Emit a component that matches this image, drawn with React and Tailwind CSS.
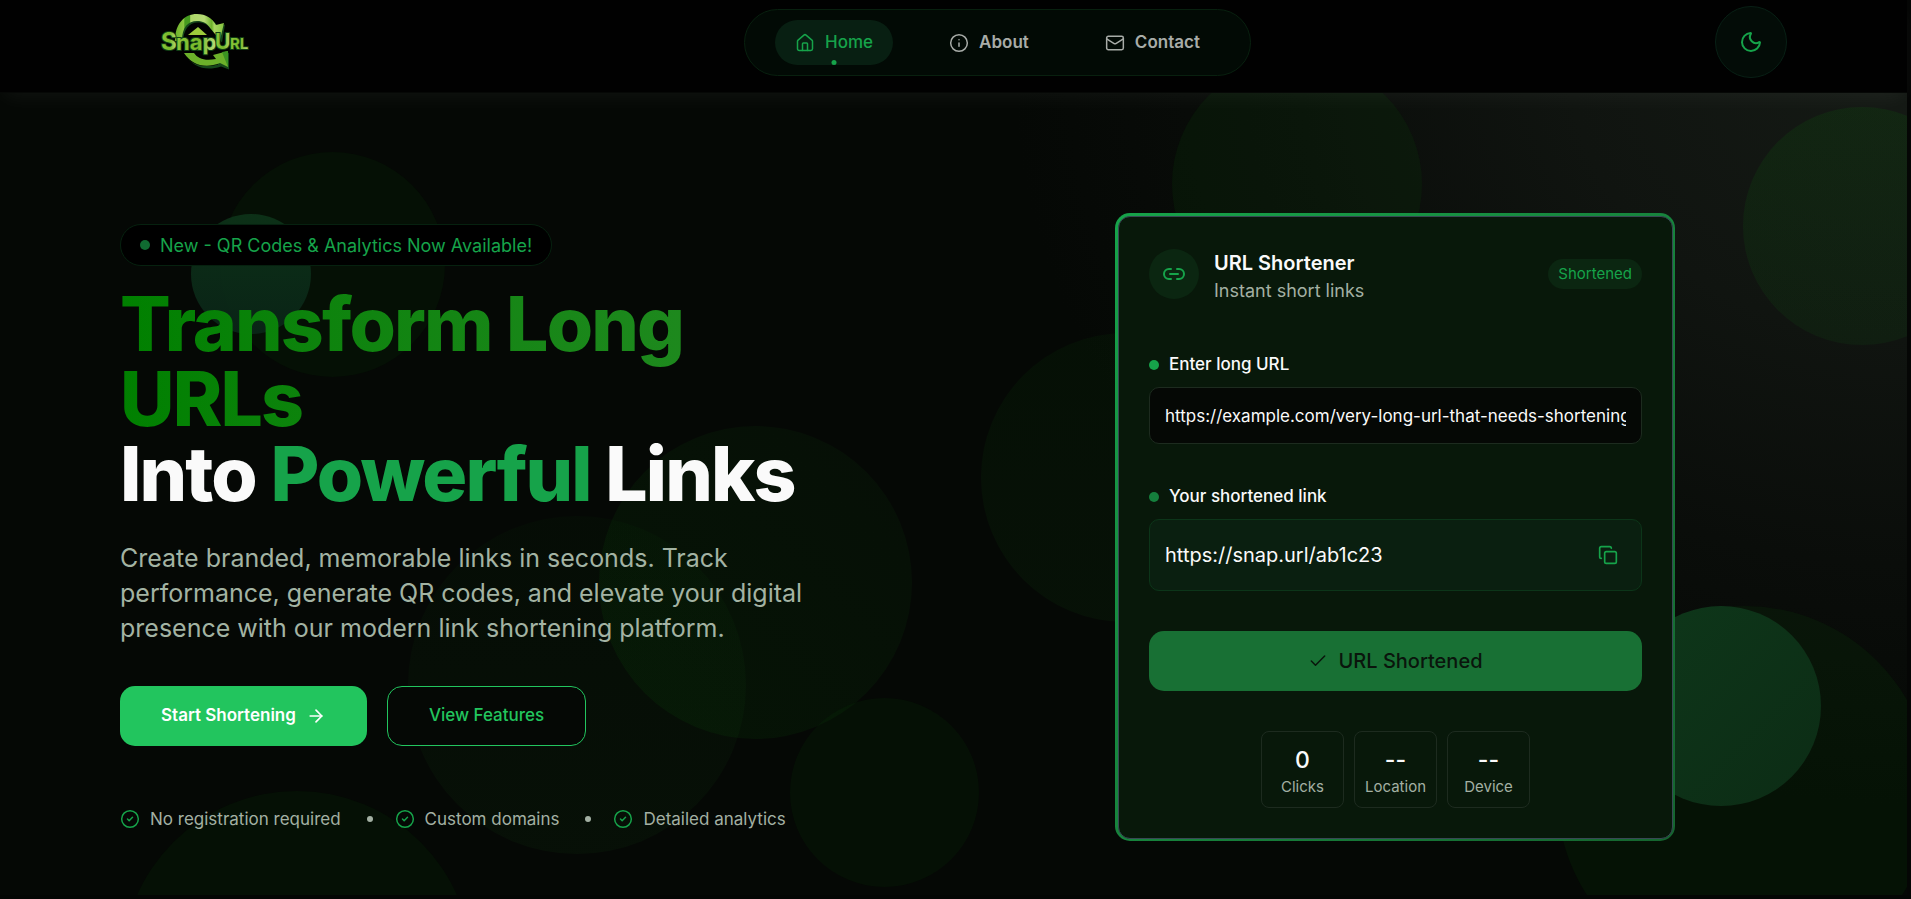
import { House, Info, Mail, Moon, ArrowRight, CircleCheck, Link2, Copy, Check } from 'lucide-react';

const circles = [
  'left-[220px] top-[152px] size-[225px] bg-[#087808]/8',
  'left-[191px] top-[214px] size-[120px] bg-linear-to-b from-[#0d3419]/90 to-[#0a2618]/90',
  'left-[599px] top-[426px] size-[313px] bg-linear-to-bl from-[#187818]/6 to-[#087808]/11',
  'left-[408px] top-[516px] size-[338px] bg-linear-to-b from-[#087808]/4 to-[#228b22]/6',
  'left-[790px] top-[698px] size-[189px] bg-[#107810]/8',
  'left-[122px] top-[791px] size-[350px] bg-[#107810]/8',
  'left-[981px] top-[333px] size-[289px] bg-linear-to-b from-[#087808]/7 to-[#187818]/8',
  'left-[1172px] top-[59px] size-[250px] bg-[#087808]/9',
  'left-[1743px] top-[107px] size-[238px] bg-linear-to-b from-[#087808]/14 to-[#107818]/10',
  'left-[1557px] top-[606px] size-[375px] bg-[#107810]/9',
  'left-[1621px] top-[606px] size-[200px] bg-linear-to-br from-[#0e371a] to-[#0c2c15]',
];

function Logo() {
  return (
    <svg viewBox="0 0 110 70" className="h-[70px] w-[110px]" role="img" aria-label="SnapUrl">
      <defs>
        <linearGradient id="lime" x1="0" y1="0" x2="1" y2="0">
          <stop offset="0" stopColor="#8cc63a" />
          <stop offset="0.55" stopColor="#76b82a" />
          <stop offset="1" stopColor="#b9dc7c" />
        </linearGradient>
        <linearGradient id="arc" x1="0" y1="0" x2="1" y2="0">
          <stop offset="0" stopColor="#6cb02a" />
          <stop offset="0.18" stopColor="#8bc540" />
          <stop offset="0.2" stopColor="#459a1f" />
          <stop offset="0.3" stopColor="#459a1f" />
          <stop offset="0.32" stopColor="#add667" />
          <stop offset="0.6" stopColor="#b5da74" />
          <stop offset="0.75" stopColor="#6cb02a" />
          <stop offset="0.8" stopColor="#a8d560" />
          <stop offset="1" stopColor="#86c440" />
        </linearGradient>
      </defs>
      <g transform="translate(1 1.5)" fill="#16471a">
        <path d="M25 37C25 20 34 10 47 10C56 10 62 13 67 20L74 18L71 36L61 24C57 18 53 16 47 16C38 16 32 23 32 37Z" />
        <path d="M34 48C40 58 50 62 67 58L64 54L78 46L78 63L70 60C55 65 42 61 34 48Z" />
      </g>
      <path d="M25 36C25 19 34 9 47 9C56 9 62 13 66 20L74 18L70 35L61 24C57 18 53 16 47 16C38 16 32 22 32 36Z" fill="url(#arc)" />
      <path d="M34 48L44 48C48 54 55 56 66 54L63 50L78 46L78 62L70 58C55 64 42 60 34 48Z" fill="#6cb02a" />
      <path d="M72 47L78 46L78 62Z" fill="#3c9322" />
      <path d="M38 30L48 22L57 30Z" fill="#9ccb3b" />
      <g fontFamily="Inter, sans-serif" fontWeight="700" stroke="#123f14" strokeWidth="2" paintOrder="stroke" fill="url(#lime)">
        <text x="11" y="45" fontSize="24">S</text>
        <text x="26" y="45" fontSize="22">nap</text>
        <text x="65" y="44" fontSize="21">U</text>
        <text x="80" y="44" fontSize="15">RL</text>
      </g>
    </svg>
  );
}

function NavItem({ icon: Icon, label, active }) {
  return (
    <a
      href={'#' + label.toLowerCase()}
      aria-current={active ? 'page' : undefined}
      className={
        active
          ? 'relative flex h-[45px] items-center gap-2.5 rounded-full bg-[#081f12] px-5 font-medium text-[#16a34a]'
          : 'relative flex h-[45px] items-center gap-2.5 rounded-full px-5 font-semibold text-[#a8aca8]'
      }
    >
      <Icon className="size-5" strokeWidth={1.8} />
      {label}
      {active && <span className="absolute bottom-0 left-1/2 size-[5px] -translate-x-1/2 rounded-full bg-[#16a34a]" />}
    </a>
  );
}

function Stat({ value, label }) {
  return (
    <div className="flex h-[77px] w-[83px] flex-col items-center justify-center rounded-[8px] border border-[#1d2b1f] pt-1">
      <span className="text-[23px] leading-[30px] font-medium text-[#fafafa]">{value}</span>
      <span className="text-[15px] leading-6 text-[#a3b0a3]">{label}</span>
    </div>
  );
}

export default function App() {
  return (
    <div className="relative isolate flex min-h-screen flex-col overflow-hidden bg-[#050805] font-['Inter',sans-serif] text-[#fafafa]">
      <div className="absolute inset-0 -z-10 bg-[radial-gradient(ellipse_900px_750px_at_100%_6%,#151a15_0%,#101410_38%,#0a0d0a_68%,#050805_100%)]" />
      <div aria-hidden="true" className="absolute inset-0 -z-10">
        {circles.map((c) => (
          <div key={c} className={'absolute rounded-full ' + c} />
        ))}
      </div>
      <div className="absolute inset-y-0 right-0 -z-10 w-1 bg-[#050605]" />
      <div className="absolute inset-x-0 bottom-0 -z-10 h-1 bg-[#040604]" />

      <header className="mr-1 flex h-[93px] items-start justify-between border-b border-[#060806] bg-[#010101] pr-[120px] pl-[150px] shadow-[0_8px_20px_-4px_rgba(255,255,255,0.05)]">
        <a href="#home" className="mt-[5px] w-[130px]">
          <Logo />
        </a>
        <nav className="mt-[9px] flex h-[67px] items-center gap-9 rounded-full border border-[#08200f] bg-[#020a05] px-[30px] text-[17px]">
          <NavItem icon={House} label="Home" active />
          <NavItem icon={Info} label="About" />
          <NavItem icon={Mail} label="Contact" />
        </nav>
        <button type="button" aria-label="Toggle theme" className="mt-1.5 flex size-[72px] items-center justify-center rounded-full border border-[#082015] bg-[#030c07] text-[#16a34a]">
          <Moon className="size-6" />
        </button>
      </header>

      <main className="flex flex-1 items-start justify-between pr-[236px] pl-[120px]">
        <section className="mt-[131px] w-[700px]">
          <p className="flex h-[42px] w-fit items-center gap-2.5 rounded-full border border-[#06210f] bg-black px-[19px] text-[18px] text-[#16a34a]">
            <span className="size-2.5 rounded-full bg-[#106b31]" />
            New - QR Codes &amp; Analytics Now Available!
          </p>
          <h1 className="mt-5 text-[75px] leading-none font-extrabold tracking-tight">
            <span className="block bg-linear-to-r from-[#008000] to-[#228b22] bg-clip-text text-transparent">
              Transform Long URLs
            </span>
            Into <span className="text-[#16a34a]">Powerful</span> Links
          </h1>
          <p className="mt-[30px] text-[25px] leading-[35px] text-[#a3b3a3]">
            Create branded, memorable links in seconds. Track performance, generate QR codes, and elevate your digital presence with our modern link shortening platform.
          </p>
          <div className="mt-10 flex gap-5 text-[17px]">
            <button type="button" className="flex h-[60px] items-center gap-2.5 rounded-[15px] bg-[#22c55e] px-[41px] font-semibold text-white">
              Start Shortening
              <ArrowRight className="size-5" />
            </button>
            <button type="button" className="h-[60px] rounded-[15px] border border-[#22c55e] bg-[#050805] px-[41px] font-medium text-[#22c55e]">
              View Features
            </button>
          </div>
          <ul className="mt-[60px] flex items-center text-[17px] leading-[26px] text-[#a3b0a3]">
            {['No registration required', 'Custom domains', 'Detailed analytics'].map((t, i) => (
              <li key={t} className="flex items-center gap-2.5">
                {i > 0 && <span className="mr-3 ml-[26px] size-1.5 rounded-full bg-[#a3b0a3]" />}
                <CircleCheck className="size-5 text-[#16a34a]" strokeWidth={1.8} />
                {t}
              </li>
            ))}
          </ul>
        </section>

        <section className="mt-[120px] w-[560px] rounded-[15px] bg-linear-to-br from-[#16a34a] to-[#15652f] pt-[3px] pr-0.5 pb-0.5 pl-[3px]">
          <div className="rounded-[12px] border border-[#384854] bg-[#08180a] px-[30px] pt-8 pb-[30px]">
            <div className="flex items-start">
              <span className="flex size-[50px] items-center justify-center rounded-full bg-[#0b2611] text-[#16a34a]">
                <Link2 className="size-6" />
              </span>
              <div className="ml-[15px] flex-1">
                <h2 className="text-[20px] leading-7 font-semibold">URL Shortener</h2>
                <p className="text-[18px] leading-7 text-[#a3b0a3]">Instant short links</p>
              </div>
              <span className="mt-2.5 rounded-full bg-[#0b2611] px-2.5 py-[5px] text-[15px] leading-5 text-[#16a34a]">Shortened</span>
            </div>

            <label htmlFor="long-url" className="mt-[47px] flex items-center gap-2.5 text-[17px] leading-[25px] font-medium">
              <span className="size-2.5 rounded-full bg-[#16a34a]" />
              Enter long URL
            </label>
            <input
              id="long-url"
              type="text"
              defaultValue="https://example.com/very-long-url-that-needs-shortening"
              className="mt-2.5 block h-[57px] w-full rounded-[10px] border border-[#1d2b1f] bg-[#050805] px-[15px] text-[17px] outline-none"
            />

            <p className="mt-10 flex items-center gap-2.5 text-[17px] leading-[25px] font-medium">
              <span className="size-2.5 rounded-full bg-[#15803d]" />
              Your shortened link
            </p>
            <div className="mt-2.5 flex h-[72px] items-center justify-between rounded-[10px] border border-[#0c3519] bg-[#0a1f10] px-[15px] text-[20px]">
              https://snap.url/ab1c23
              <button type="button" aria-label="Copy link" className="p-2 text-[#16a34a]">
                <Copy className="size-5" />
              </button>
            </div>

            <button type="button" className="mt-10 flex h-[60px] w-full items-center justify-center gap-2.5 rounded-[15px] bg-[#187034] text-[20px] font-medium text-[#0a150c]">
              <Check className="size-5" strokeWidth={1.8} />
              URL Shortened
            </button>

            <div className="mt-10 flex justify-center gap-2.5">
              <Stat value="0" label="Clicks" />
              <Stat value="--" label="Location" />
              <Stat value="--" label="Device" />
            </div>
          </div>
        </section>
      </main>
    </div>
  );
}
